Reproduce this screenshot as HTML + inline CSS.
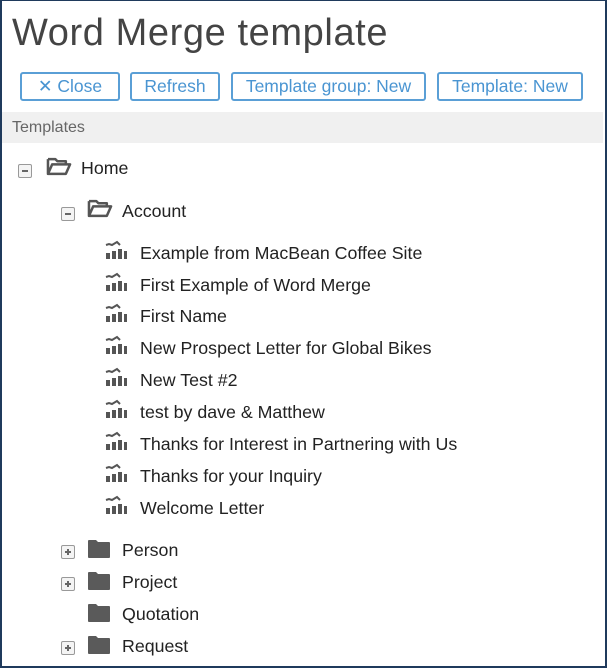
<!DOCTYPE html>
<html><head><style>
html,body{margin:0;padding:0;}
body{width:607px;height:669px;position:relative;background:#fff;font-family:"Liberation Sans",sans-serif;overflow:hidden;}
.frame{position:absolute;left:0;top:0;width:603px;height:665px;border:2px solid #1f3a5c;border-top-width:1px;border-right-width:3px;}
h1{position:absolute;left:12px;top:12px;margin:0;font-weight:normal;font-size:38px;color:#444;letter-spacing:0.6px;}
.btn{position:absolute;top:72px;height:25px;border:2px solid #5a9fd6;border-radius:3px;color:#4a95d2;font-size:17.5px;line-height:25px;text-align:center;box-sizing:content-box;white-space:nowrap;}
.bar{position:absolute;left:2px;top:112px;width:601px;height:31px;background:#f0f0f0;color:#666;font-size:16px;line-height:31px;padding-left:10px;box-sizing:border-box;}
.t{position:absolute;font-size:17.8px;color:#222;line-height:20px;white-space:nowrap;}
.box{position:absolute;width:12px;height:12px;border:1.5px solid #999;border-radius:2px;background:#f4f4f4;}
.box::after{content:"";position:absolute;left:3px;top:5px;width:6px;height:1.8px;background:#666;}
.plus::before{content:"";position:absolute;left:5.1px;top:3px;width:1.8px;height:6px;background:#666;}
svg{position:absolute;}
</style></head><body>
<div class="frame"></div>
<h1>Word Merge template</h1>
<div class="btn" style="left:20px;width:96px;">✕ Close</div>
<div class="btn" style="left:130px;width:86px;">Refresh</div>
<div class="btn" style="left:231px;width:191px;">Template group: New</div>
<div class="btn" style="left:437px;width:142px;">Template: New</div>
<div class="bar">Templates</div>

<div class="box" style="left:18px;top:164px;"></div>
<svg style="left:46px;top:156px" width="26" height="21" viewBox="0 0 24 20"><path d="M1.5 3h7l2 2h8v3 M1.5 3v14h17l4-9h-17l-4 9" fill="none" stroke="#555" stroke-width="2.4" stroke-linejoin="round"/></svg>
<div class="t" style="left:81px;top:158px;">Home</div>

<div class="box" style="left:61px;top:207px;"></div>
<svg style="left:87px;top:198px" width="26" height="21" viewBox="0 0 24 20"><path d="M1.5 3h7l2 2h8v3 M1.5 3v14h17l4-9h-17l-4 9" fill="none" stroke="#555" stroke-width="2.4" stroke-linejoin="round"/></svg>
<div class="t" style="left:122px;top:201px;">Account</div>

<svg width="0" height="0"><defs><g id="ic"><path d="M1 5l3-1 3 1 5-3 3 3" fill="none" stroke="#555" stroke-width="2"/><rect x="1" y="13" width="4" height="6" fill="#555"/><rect x="7" y="11" width="4" height="8" fill="#555"/><rect x="13" y="9" width="4" height="10" fill="#555"/><rect x="19" y="11" width="3" height="8" fill="#555"/></g></defs></svg>

<svg style="left:105px;top:240px" width="24" height="22"><use href="#ic"/></svg><div class="t" style="left:140px;top:243px;">Example from MacBean Coffee Site</div>
<svg style="left:105px;top:272px" width="24" height="22"><use href="#ic"/></svg><div class="t" style="left:140px;top:275px;">First Example of Word Merge</div>
<svg style="left:105px;top:303px" width="24" height="22"><use href="#ic"/></svg><div class="t" style="left:140px;top:306px;">First Name</div>
<svg style="left:105px;top:335px" width="24" height="22"><use href="#ic"/></svg><div class="t" style="left:140px;top:338px;">New Prospect Letter for Global Bikes</div>
<svg style="left:105px;top:367px" width="24" height="22"><use href="#ic"/></svg><div class="t" style="left:140px;top:370px;">New Test #2</div>
<svg style="left:105px;top:399px" width="24" height="22"><use href="#ic"/></svg><div class="t" style="left:140px;top:402px;">test by dave &amp; Matthew</div>
<svg style="left:105px;top:431px" width="24" height="22"><use href="#ic"/></svg><div class="t" style="left:140px;top:434px;">Thanks for Interest in Partnering with Us</div>
<svg style="left:105px;top:463px" width="24" height="22"><use href="#ic"/></svg><div class="t" style="left:140px;top:466px;">Thanks for your Inquiry</div>
<svg style="left:105px;top:495px" width="24" height="22"><use href="#ic"/></svg><div class="t" style="left:140px;top:498px;">Welcome Letter</div>

<svg width="0" height="0"><defs><g id="ff"><path d="M0 2a1 1 0 0 1 1-1h7l2 2h11a1 1 0 0 1 1 1v14a1 1 0 0 1-1 1h-20a1 1 0 0 1-1-1z" fill="#5a5a5a"/></g></defs></svg>

<div class="box plus" style="left:61px;top:545px;"></div>
<svg style="left:88px;top:539px" width="23" height="20"><use href="#ff"/></svg><div class="t" style="left:122px;top:540px;">Person</div>
<div class="box plus" style="left:61px;top:577px;"></div>
<svg style="left:88px;top:571px" width="23" height="20"><use href="#ff"/></svg><div class="t" style="left:122px;top:572px;">Project</div>
<svg style="left:88px;top:603px" width="23" height="20"><use href="#ff"/></svg><div class="t" style="left:122px;top:604px;">Quotation</div>
<div class="box plus" style="left:61px;top:641px;"></div>
<svg style="left:88px;top:635px" width="23" height="20"><use href="#ff"/></svg><div class="t" style="left:122px;top:636px;">Request</div>
</body></html>
